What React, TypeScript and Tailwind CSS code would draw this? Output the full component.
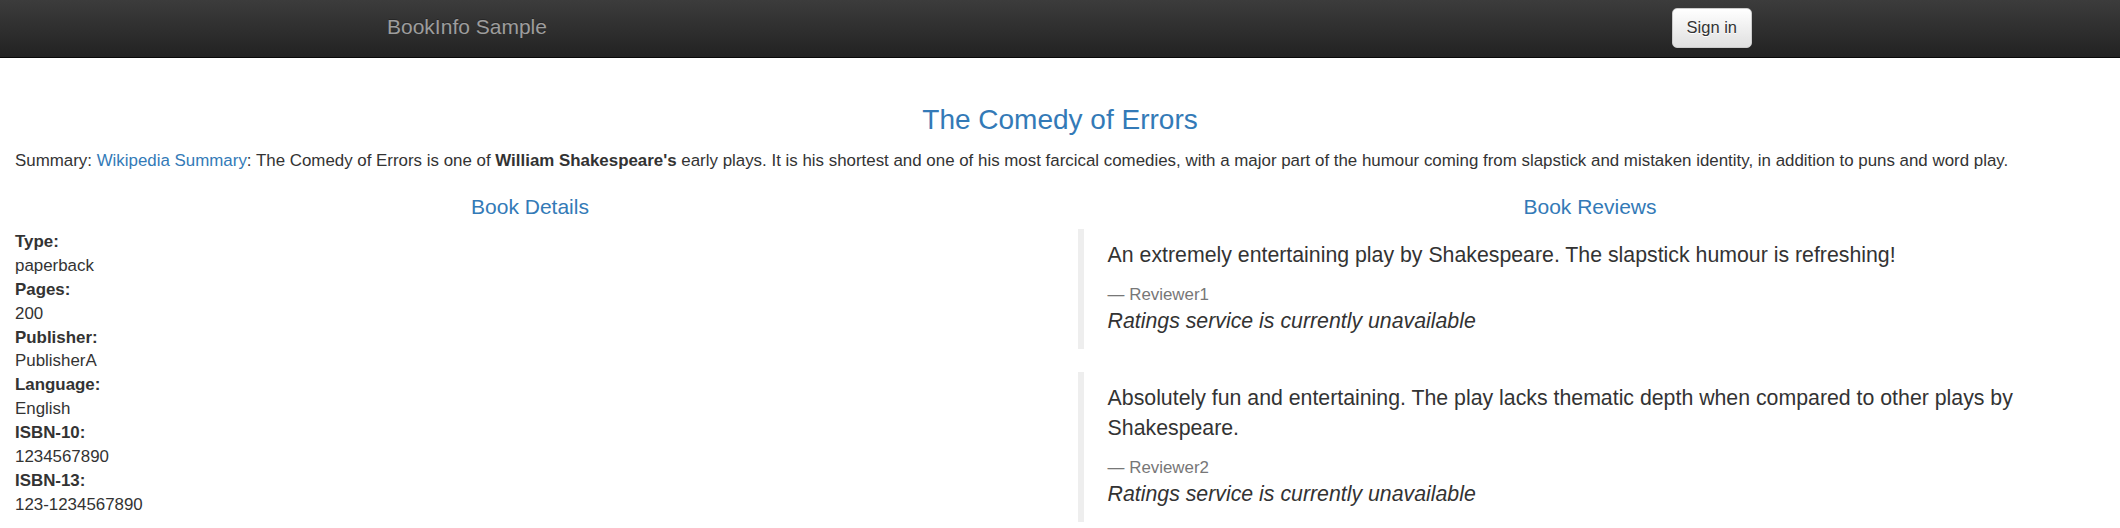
import React from "react";

const details: [string, string][] = [
  ["Type:", "paperback"],
  ["Pages:", "200"],
  ["Publisher:", "PublisherA"],
  ["Language:", "English"],
  ["ISBN-10:", "1234567890"],
  ["ISBN-13:", "123-1234567890"],
];

const reviews = [
  {
    text: "An extremely entertaining play by Shakespeare. The slapstick humour is refreshing!",
    reviewer: "Reviewer1",
  },
  {
    text: "Absolutely fun and entertaining. The play lacks thematic depth when compared to other plays by Shakespeare.",
    reviewer: "Reviewer2",
  },
];

export default function App() {
  return (
    <div className="min-h-[528px] bg-white font-['Liberation_Sans',Arial,sans-serif] text-[16.9px] leading-[23.9px] text-[#333]">
      {/* Navbar */}
      <nav className="h-[58px] border-b border-[#080808] bg-[linear-gradient(to_bottom,#3c3c3c_0%,#222_100%)]">
        <div className="mx-auto flex w-[1384px] items-start justify-between pl-[19px]">
          <a className="pt-[15px] text-[21px] leading-[24px] text-[#9d9d9d] [text-shadow:0_-1px_0_rgba(0,0,0,0.25)]">
            BookInfo Sample
          </a>
          <button
            type="button"
            className="mt-[8px] h-[40px] rounded-[5px] border border-[#ccc] bg-[linear-gradient(to_bottom,#fff_0%,#e0e0e0_100%)] px-[14px] text-[16.5px] text-[#333] shadow-[inset_0_1px_0_rgba(255,255,255,0.15),0_1px_1px_rgba(0,0,0,0.075)] [text-shadow:0_1px_0_#fff]"
          >
            Sign in
          </button>
        </div>
      </nav>

      {/* Title + summary */}
      <div className="px-[15px] pt-[46px]">
        <h3 className="mb-[14px] text-center text-[28px] leading-[31px] text-[#337ab7]">
          The Comedy of Errors
        </h3>
        <p className="mb-[12px]">
          Summary: <a className="text-[#337ab7]">Wikipedia Summary</a>: The Comedy of Errors is one of{" "}
          <b>William Shakespeare's</b> early plays. It is his shortest and one of his most farcical comedies,
          with a major part of the humour coming from slapstick and mistaken identity, in addition to puns and
          word play.
        </p>
      </div>

      <div className="grid grid-cols-2">
        {/* Book details */}
        <div className="px-[15px]">
          <h4 className="mt-[10px] mb-[12px] text-center text-[21px] leading-[23px] text-[#337ab7]">
            Book Details
          </h4>
          <dl>
            {details.map(([k, v]) => (
              <React.Fragment key={k}>
                <dt className="font-bold">{k}</dt>
                <dd>{v}</dd>
              </React.Fragment>
            ))}
          </dl>
        </div>

        {/* Book reviews */}
        <div className="px-[18px]">
          <h4 className="mt-[10px] mb-[11px] text-center text-[21px] leading-[23px] text-[#337ab7]">
            Book Reviews
          </h4>
          {reviews.map((r) => (
            <blockquote
              key={r.reviewer}
              className="mb-[23.8px] border-l-[6px] border-[#eee] px-[23.6px] py-[11.9px] text-[21.3px] leading-[29.9px]"
            >
              <p className="mb-[12px]">{r.text}</p>
              <small className="block text-[16.9px] leading-[24px] text-[#777]">
                {"\u2014\u00a0"}
                {r.reviewer}
              </small>
              <i>Ratings service is currently unavailable</i>
            </blockquote>
          ))}
        </div>
      </div>
    </div>
  );
}
